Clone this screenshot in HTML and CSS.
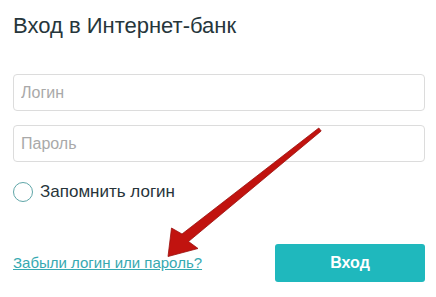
FILE: index.html
```html
<!DOCTYPE html>
<html lang="ru">
<head>
<meta charset="utf-8">
<title>Вход в Интернет-банк</title>
<link rel="stylesheet" href="styles.css">
</head>
<body>
<div class="page">
  <h1 class="title">Вход в Интернет-банк</h1>
  <form class="form">
    <div class="fields">
      <input class="field" type="text" placeholder="Логин">
      <input class="field" type="password" placeholder="Пароль">
    </div>
    <label class="remember">
      <span class="radio"></span>
      <span class="remember-text">Запомнить логин</span>
    </label>
    <div class="actions">
      <a class="forgot" href="#">Забыли логин или пароль?</a>
      <button class="submit" type="button">Вход</button>
    </div>
  </form>
  <svg class="arrow" width="436" height="297" viewBox="0 0 436 297" aria-hidden="true">
    <polygon points="321.2,131 188.5,241.5 198,248.5 168,256.5 171.5,228 182,234 318.8,128" fill="#c1130f" stroke="#9b0f0c" stroke-width="0.8" stroke-linejoin="round"/>
  </svg>
</div>
</body>
</html>
```
FILE: styles.css
```css
* { box-sizing: border-box; }
html, body { margin: 0; padding: 0; background: #ffffff; }
body { font-family: "Liberation Sans", Arial, sans-serif; }
.page {
  position: relative;
  width: 436px;
  height: 297px;
  padding: 13px 11px 0 13px;
}
.title {
  margin: 0;
  font-size: 22px;
  line-height: 25px;
  font-weight: normal;
  color: #26363b;
}
.form { display: flex; flex-direction: column; }
.fields {
  margin-top: 36px;
  display: flex;
  flex-direction: column;
  gap: 14px;
}
.field {
  display: block;
  width: 412px;
  height: 37px;
  margin: 0;
  padding: 0 7px;
  border: 1px solid #dcdcdc;
  border-radius: 4px;
  font-family: "Liberation Sans", Arial, sans-serif;
  font-size: 16px;
  color: #333;
  background: #fff;
  outline: none;
}
.field::placeholder { color: #a9a9a9; }
.remember {
  margin-top: 20px;
  height: 20px;
  display: flex;
  align-items: center;
  gap: 7px;
}
.radio {
  width: 20px;
  height: 20px;
  border: 1.3px solid #5fa6a8;
  border-radius: 50%;
  flex: none;
}
.remember-text {
  font-size: 17px;
  line-height: 20px;
  color: #27343a;
}
.actions {
  margin-top: 42px;
  display: flex;
  align-items: center;
  justify-content: space-between;
}
.forgot {
  font-size: 15px;
  line-height: 18px;
  color: #36a9b1;
  text-decoration: underline;
}
.submit {
  width: 150px;
  height: 38px;
  border: none;
  border-radius: 3px;
  background: #1fb8bd;
  color: #ffffff;
  font-family: "Liberation Sans", Arial, sans-serif;
  font-size: 16px;
  font-weight: bold;
}
.arrow {
  position: absolute;
  left: 0;
  top: 0;
  pointer-events: none;
}
```
